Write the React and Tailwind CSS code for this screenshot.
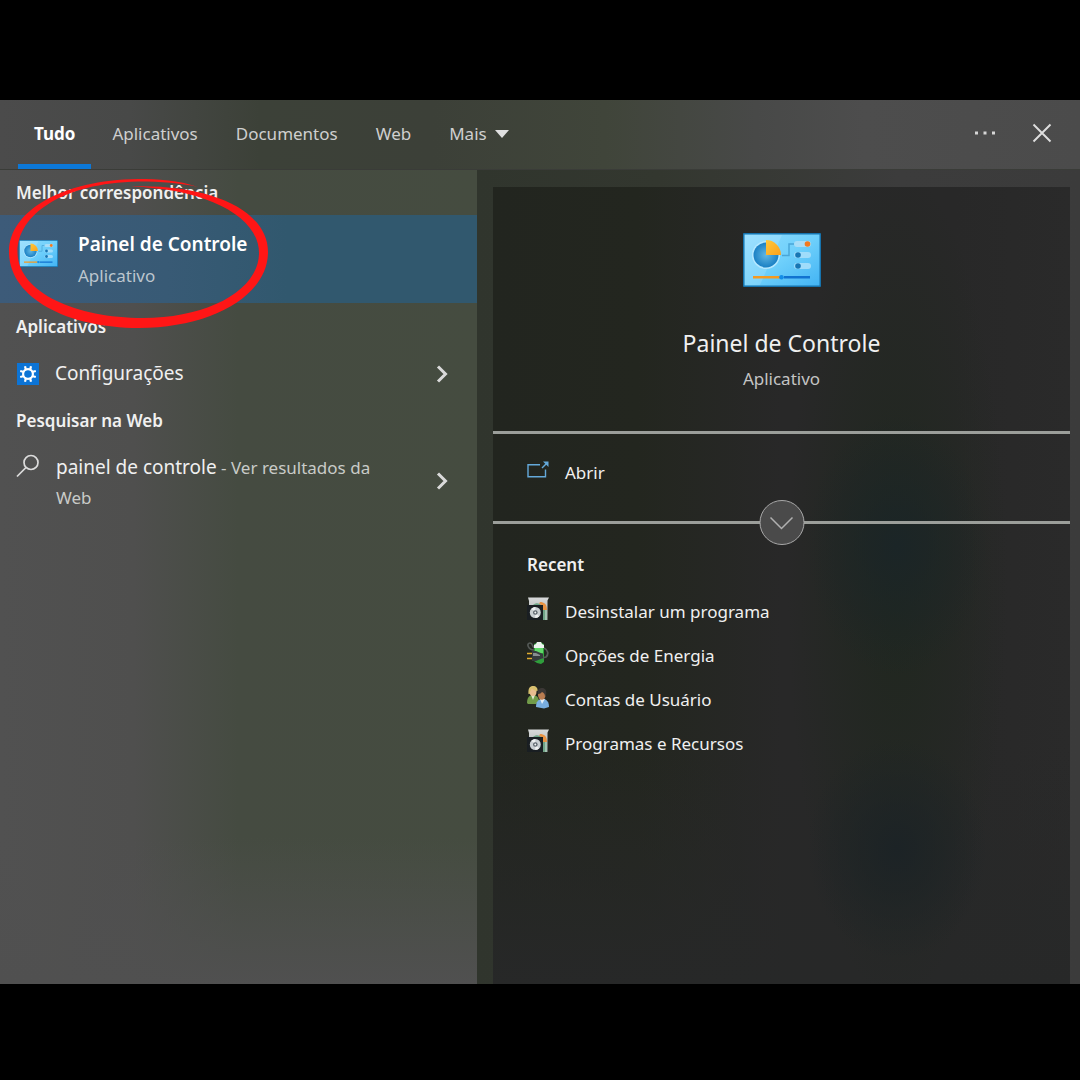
import React from "react";

function ControlPanelIcon({ className }) {
  return (
    <svg viewBox="0 0 78 54" className={className} aria-hidden="true">
      <defs>
        <linearGradient id="cpBack" x1="0" y1="0" x2="1" y2="1">
          <stop offset="0" stopColor="#8fdcff" />
          <stop offset="0.5" stopColor="#6fd0fb" />
          <stop offset="1" stopColor="#43b4f4" />
        </linearGradient>
        <radialGradient id="cpPie">
          <stop offset="0" stopColor="#62b7e2" />
          <stop offset="1" stopColor="#1a80c4" />
        </radialGradient>
        <linearGradient id="cpSlice" x1="0" y1="0" x2="1" y2="1">
          <stop offset="0" stopColor="#ffc83a" />
          <stop offset="1" stopColor="#fba11c" />
        </linearGradient>
      </defs>
      <rect width="78" height="54" rx="1" fill="#1673ad" />
      <rect x="1.500" y="1.500" width="75" height="51" fill="url(#cpBack)" />
      <path d="M2 2H39L17 52H2Z" fill="#fff" opacity="0.14" />
      <circle cx="23" cy="22" r="14" fill="#b5e8ff" />
      <circle cx="23" cy="22" r="12.500" fill="url(#cpPie)" />
      <path d="M23 7a15 15 0 0 1 15 15H23Z" fill="url(#cpSlice)" />
      <path d="M39 22.500h7V11h7" fill="none" stroke="#4aa6d8" strokeWidth="1.500" />
      <rect x="51" y="8" width="17" height="6" rx="3" fill="#a9ddf7" />
      <rect x="51" y="19" width="17" height="6" rx="3" fill="#a0dcfa" />
      <rect x="51" y="30" width="17" height="6" rx="3" fill="#a0dcfa" />
      <circle cx="64.500" cy="11" r="2.800" fill="#f37a1f" />
      <circle cx="55" cy="22" r="2.800" fill="#1776b4" />
      <circle cx="55" cy="33" r="2.800" fill="#1776b4" />
      <rect x="10" y="43" width="27" height="2.500" fill="#f59a20" />
      <rect x="41" y="43" width="26" height="2.500" fill="#1173d0" />
      <circle cx="38.500" cy="44.200" r="2.300" fill="#148de6" />
    </svg>
  );
}

function GearTile() {
  return (
    <svg viewBox="0 0 22 22" className="size-[22px] shrink-0" aria-hidden="true">
      <rect width="22" height="22" fill="#0c74d6" />
      <g stroke="#fff" strokeWidth="2.200" fill="none">
        <path d="M8 3.200l1 4M14 3.200l-1 4M8 18.800l1-4M14 18.800l-1-4M3.200 8l4 1M3.200 14l4-1M18.800 8l-4 1M18.800 14l-4-1" />
        <circle cx="11" cy="11" r="4.900" />
      </g>
    </svg>
  );
}

function SearchGlyph() {
  return (
    <svg viewBox="0 0 24 24" className="size-6 shrink-0" fill="none" stroke="#dcdcdc" strokeWidth="1.700" aria-hidden="true">
      <circle cx="15" cy="8.500" r="7" />
      <path d="M10 13.500L1 22.500" />
    </svg>
  );
}

function ChevronRight() {
  return (
    <svg viewBox="0 0 12 18" className="h-[18px] w-3 shrink-0" fill="none" stroke="#dadada" strokeWidth="3" aria-hidden="true">
      <path d="M2 1.500L9.500 9L2 16.500" />
    </svg>
  );
}

function OpenIcon() {
  return (
    <svg viewBox="0 0 22 17" className="h-[17px] w-[22px] shrink-0" fill="none" stroke="#64a9da" strokeWidth="1.400" aria-hidden="true">
      <path d="M13 3.700H1v12h17.500V8.500" />
      <path d="M15 7l5-5" />
      <path d="M16 0.500h5.500V6Z" fill="#64a9da" stroke="none" />
    </svg>
  );
}

function ProgramsIcon() {
  return (
    <svg viewBox="0 0 22 24" className="h-6 w-[22px]" aria-hidden="true">
      <defs>
        <linearGradient id="pgBox" x1="0" y1="0" x2="0" y2="1">
          <stop offset="0" stopColor="#d8dada" />
          <stop offset="1" stopColor="#a4a8a8" />
        </linearGradient>
      </defs>
      <path d="M1 0.500h21l-1.500 3V23H2V4Z" fill="url(#pgBox)" />
      <path d="M13 5c4 0 7 2 7 8h-4c0-3-1-5-4-6Z" fill="#e99343" />
      <path d="M6 8c3-3 7-2 9 1l1 4h4v10h-5V10Z" fill="#6fa386" />
      <rect x="18" y="13" width="2" height="10" fill="#a3c4b2" />
      <rect x="0" y="8" width="16" height="15" fill="#191e22" />
      <circle cx="8.300" cy="15.500" r="5.500" fill="#c9cfd3" />
      <path d="M8.300 15.500L4.500 11.700a5.500 5.500 0 0 1 3.800-1.700ZM8.300 15.500l3.800 3.800a5.500 5.500 0 0 1-3.800 1.700Z" fill="#eef1f2" />
      <circle cx="8.300" cy="15.500" r="2.300" fill="#59636b" />
      <circle cx="8.300" cy="15.500" r="1" fill="#f2f4f5" />
    </svg>
  );
}

function PowerIcon() {
  return (
    <svg viewBox="0 0 22 24" className="h-6 w-[22px]" aria-hidden="true">
      <path d="M7 9C1 9-1 2 3 2s1 6 7 5" fill="none" stroke="#555a57" strokeWidth="1.600" />
      <path d="M9 2l2-1h3l1 1 2 1v18l-3 2-4-1-3-2V3Z" fill="#2f9e3c" />
      <path d="M7 4l2-1 1-2h4l1 2 2 1v3H7Z" fill="#edf4ef" />
      <path d="M8 7h8v5H8Z" fill="#5fd868" />
      <path d="M17 7c4 2 5 6 2 9l-4 1" fill="none" stroke="#555b57" strokeWidth="1.800" />
      <path d="M0 12.500h5M0 17.500h5" stroke="#dfac2f" strokeWidth="1.700" />
      <path d="M5 10h4l7 3v4l-7 3H5Z" fill="#363b3d" />
      <path d="M6 12h3l4 2v1H6Z" fill="#888e90" />
    </svg>
  );
}

function UsersIcon() {
  return (
    <svg viewBox="0 0 22 24" className="h-6 w-[22px]" aria-hidden="true">
      <path d="M0 18c0-5 2-8 6-8s6 3 6 7l-3 2H1Z" fill="#719b49" />
      <path d="M4 10l2 5 2-5Z" fill="#dfe8cc" />
      <ellipse cx="6" cy="6.500" rx="3.500" ry="4.500" fill="#e9bd8f" />
      <path d="M1.500 9C1 3 3 1 6 1s5 2 4.500 5C8 6 6 5 5 3.500 4 5 3 6 2.800 9Z" fill="#d8c06e" />
      <path d="M9 22c0-5 2-8 6.500-8s6.500 3 6.500 8l-5 1.500Z" fill="#79aee0" />
      <path d="M13 14l2 5 3-5Z" fill="#e5f0fa" />
      <ellipse cx="14.800" cy="10" rx="3.800" ry="4.800" fill="#b97c50" />
      <path d="M11 9c-1-4 1-6 4-6s5 2 4 7l-1 2c0-3-1-4-3-5-1 1-2 2-4 2Z" fill="#3b3735" />
    </svg>
  );
}

function HighlightRing() {
  return (
    <svg viewBox="0 0 280 160" className="pointer-events-none absolute left-0 top-[75px] h-[160px] w-[280px]" aria-hidden="true">
      <path
        fill="#ff1616"
        d="M198 12C178 5 158 4 138 4C62 5 9 36 9 77C9 122 66 153 139 153C211 153 268 121 268 77C268 36 212 9 131 11.500C206 14 259 41 259 78C259 115 208 143 143 143C75 143 17.500 117 17.500 77C17.500 40 62 8 138 6.500C162 6.500 180 8 198 12Z"
      />
    </svg>
  );
}

const tabs = ["Aplicativos", "Documentos", "Web"];

const recent = [
  { label: "Desinstalar um programa", Icon: ProgramsIcon },
  { label: "Opções de Energia", Icon: PowerIcon },
  { label: "Contas de Usuário", Icon: UsersIcon },
  { label: "Programas e Recursos", Icon: ProgramsIcon },
];

function GroupHeading({ children }) {
  return <h2 className="flex h-[47px] items-center px-4 text-[17px] font-semibold">{children}</h2>;
}

export default function App() {
  return (
    <div className="flex min-h-screen flex-col bg-black pt-[100px] pb-24 font-['Noto_Sans','Open_Sans',sans-serif] text-[#f0f0f0]">
      <main className="relative flex flex-1 flex-col bg-[linear-gradient(90deg,#4b4b4b_0%,#484948_12%,#3c4138_24%,#3c4038_40%,#40453a_56%,#484948_70%,#4d4d4d_80%,#4b4b4b_100%)]">
        <header className="flex h-[70px] shrink-0 items-stretch border-b border-[#3a3c38] pl-[18px] text-[17px] text-[#cfcfcf]">
          <nav className="flex flex-1 items-stretch">
            <button className="border-b-[5px] border-[#0c78d8] px-4 pt-[3px] font-bold text-white">Tudo</button>
            {tabs.map((tab) => (
              <button key={tab} className="ml-1 px-[17px] pb-[2px]">
                {tab}
              </button>
            ))}
            <button className="ml-1 flex items-center gap-2 px-[17px] pb-[2px]">
              Mais
              <svg viewBox="0 0 14 8" className="h-2 w-[14px]" aria-hidden="true">
                <path d="M0 0h14L7 8Z" fill="#e0e0e0" />
              </svg>
            </button>
          </nav>
          <button aria-label="Opções" className="px-4 pb-1">
            <svg viewBox="0 0 22 4" className="h-1 w-[22px]" fill="#d6d6d6" aria-hidden="true">
              <path d="M1 0.500h3v3H1ZM9.500 0.500h3v3h-3ZM18 0.500h3v3h-3Z" />
            </svg>
          </button>
          <button aria-label="Fechar" className="mr-2 px-5 pb-1">
            <svg viewBox="0 0 20 20" className="size-5" fill="none" stroke="#dedede" strokeWidth="1.900" aria-hidden="true">
              <path d="M1.500 1.500l17 17M18.500 1.500l-17 17" />
            </svg>
          </button>
        </header>

        <div className="flex flex-1">
          <section className="w-[477px] shrink-0 bg-[linear-gradient(0deg,#505050_0%,#50505000_18%),linear-gradient(90deg,#515151_0%,#4f4f4e_28%,#454b41_50%,#454c40_100%)]">
            <h2 className="flex h-[45px] items-center px-4 text-[17px] font-semibold">Melhor correspondência</h2>
            <button className="flex h-[88px] w-full items-center bg-[linear-gradient(90deg,#3d5b79_0%,#385a75_35%,#31586e_60%,#31586e_100%)] pl-[19px] text-left">
              <span className="pb-3">
                <ControlPanelIcon className="h-[27px] w-[39px] shrink-0" />
              </span>
              <span className="ml-5 flex flex-col pt-[2px]">
                <span className="text-[19px] leading-8 font-semibold text-white">Painel de Controle</span>
                <span className="text-[17px] leading-8 text-[#bcc6ce]">Aplicativo</span>
              </span>
            </button>
            <GroupHeading>Aplicativos</GroupHeading>
            <button className="flex h-[47px] w-full items-center pr-[29px] pl-[17px] text-left">
              <GearTile />
              <span className="ml-4 flex-1 text-[19px]">Configurações</span>
              <ChevronRight />
            </button>
            <GroupHeading>Pesquisar na Web</GroupHeading>
            <button className="flex w-full items-center pt-[8px] pb-[6px] pr-[29px] pl-4 text-left">
              <span className="flex flex-1 items-start">
                <span className="pt-[2px]">
                  <SearchGlyph />
                </span>
                <span className="ml-4 max-w-[340px] text-[17px] leading-[30px] text-[#c9cbc8]">
                  <span className="text-[19px] text-[#f0f0f0]">painel de controle</span> - Ver resultados da Web
                </span>
              </span>
              <span className="pb-1">
                <ChevronRight />
              </span>
            </button>
          </section>

          <section className="flex flex-1 flex-col bg-[linear-gradient(90deg,#30352d_0%,#33372f_30%,#3c3c3c_70%,#3b3b3b_100%)] pt-[17px] pr-[10px] pl-4">
            <div className="flex-1 bg-[radial-gradient(ellipse_90px_130px_at_70%_45%,#1b2527_0%,#1b252700_100%),radial-gradient(ellipse_90px_110px_at_70%_83%,#1c2326_0%,#1c232600_100%),radial-gradient(ellipse_110px_420px_at_70%_50%,#20271f_0%,#20271f00_100%),linear-gradient(0deg,#272828_0%,#27282800_30%),linear-gradient(90deg,#22251f_0%,#23261f_25%,#282828_50%,#282828_80%,#2a2a2a_100%)]">
              <div className="flex h-[247px] flex-col items-center border-b-[3px] border-[#9b9e9a] pt-[46px]">
                <ControlPanelIcon className="h-[54px] w-[78px]" />
                <h1 className="mt-10 text-[23px] leading-8">Painel de Controle</h1>
                <p className="mt-1 text-[17px] leading-8 text-[#c4c4c4]">Aplicativo</p>
              </div>
              <div className="relative h-[90px] border-b-[3px] border-[#9b9e9a] pt-[23px]">
                <button className="flex h-8 w-full items-center pl-[34px] text-left text-[17px]">
                  <span className="flex h-8 items-start pt-1">
                    <OpenIcon />
                  </span>
                  <span className="ml-4">Abrir</span>
                </button>
                <button
                  aria-label="Expandir"
                  className="absolute -bottom-6 left-1/2 flex size-[45px] -translate-x-1/2 items-center justify-center rounded-full border border-[#a8a8a8] bg-[#4a4a4a]"
                >
                  <svg viewBox="0 0 24 14" className="h-[14px] w-6" fill="none" stroke="#b0b0b0" strokeWidth="1.500" aria-hidden="true">
                    <path d="M1 1.500l11 11 11-11" />
                  </svg>
                </button>
              </div>
              <div className="pt-[18px] pl-[34px] text-[17px]">
                <h2 className="flex h-[46px] items-center font-semibold">Recent</h2>
                <ul className="pt-[2px]">
                  {recent.map(({ label, Icon }) => (
                    <li key={label}>
                      <button className="flex h-11 w-full items-center gap-4 text-left">
                        <span className="pb-[6px]">
                          <Icon />
                        </span>
                        {label}
                      </button>
                    </li>
                  ))}
                </ul>
              </div>
            </div>
          </section>
        </div>
        <HighlightRing />
      </main>
    </div>
  );
}
